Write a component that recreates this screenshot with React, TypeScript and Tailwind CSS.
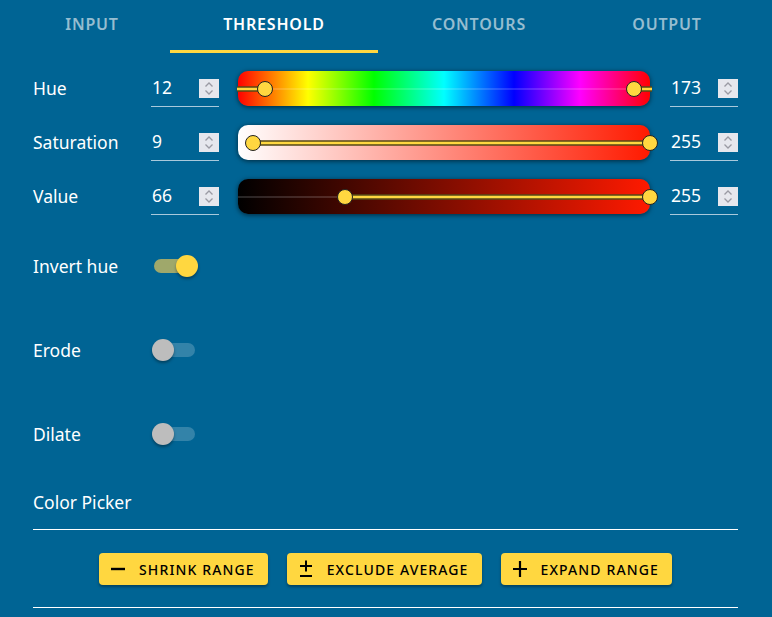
import React from "react";

const tabs = [
  { label: "INPUT", w: "w-[170px] pl-[14px]", active: false },
  { label: "THRESHOLD", w: "w-[208px]", active: true },
  { label: "CONTOURS", w: "w-[202px]", active: false },
  { label: "OUTPUT", w: "w-[192px] pr-[18px]", active: false },
];

function Spinner() {
  return (
    <div className="flex h-[19px] w-[20px] items-center justify-center bg-[#e6e7ed]">
      <svg width="12" height="15" viewBox="0 0 12 15" fill="none" stroke="#9a9aa3" strokeWidth="1.3">
        <path d="M2.5 5.5 6 2l3.5 3.5" />
        <path d="M2.5 9.5 6 13l3.5-3.5" />
      </svg>
    </div>
  );
}

function NumberBox({ value }: { value: number }) {
  return (
    <div className="flex h-[36px] w-[68px] items-center justify-between border-b border-[#a9c9dc] pl-px">
      <span className="text-[17.5px] leading-none">{value}</span>
      <Spinner />
    </div>
  );
}

interface SliderProps {
  lo: number;
  hi: number;
  max: number;
  gradient: string;
  inverted?: boolean;
}

function RangeSlider({ lo, hi, max, gradient, inverted }: SliderProps) {
  const a = (lo / max) * 100;
  const b = (hi / max) * 100;
  const sel = "absolute top-1/2 h-[5px] -translate-y-1/2 border-y border-black bg-[#ffd740]";
  const faint = "absolute top-1/2 h-px -translate-y-1/2 bg-white/30";
  return (
    <div className={`relative h-[35px] flex-1 rounded-[10px] shadow-[0_1px_5px_rgba(0,0,0,0.6)] ${gradient}`}>
      {inverted ? (
        <>
          <div className={sel} style={{ left: -1, width: `${a}%` }} />
          <div className={faint} style={{ left: `${a}%`, width: `${b - a}%` }} />
          <div className={sel} style={{ left: `${b}%`, right: -2 }} />
        </>
      ) : (
        <>
          <div className={faint} style={{ left: 0, width: `${a}%` }} />
          <div className={sel} style={{ left: `${a}%`, width: `${b - a}%` }} />
        </>
      )}
      {[a, b].map((p, i) => (
        <div
          key={i}
          className="absolute top-1/2 h-[16px] w-[16px] -translate-x-1/2 -translate-y-1/2 rounded-full border border-[#222] bg-[#ffd740]"
          style={{ left: `${p}%` }}
        />
      ))}
    </div>
  );
}

function Toggle({ on }: { on: boolean }) {
  return (
    <div className="relative h-[22px] w-[44px]">
      <div
        className={`absolute left-[1px] right-[2px] top-[4px] h-[14px] rounded-full ${
          on ? "bg-[#9fa86b]" : "bg-white/20"
        }`}
      />
      <div
        className={`absolute top-0 h-[22px] w-[22px] rounded-full shadow-[0_2px_3px_rgba(0,0,0,0.35)] ${
          on ? "right-[-1px] bg-[#ffd740]" : "left-[-1px] bg-[#bdbdbd]"
        }`}
      />
    </div>
  );
}

function Btn({ icon, label }: { icon: React.ReactNode; label: string }) {
  return (
    <button className="flex h-[32px] items-center gap-[13px] rounded-[4px] bg-[#ffd740] pl-[11px] pr-[13px] text-[14px] font-medium tracking-[0.08em] text-black shadow-[0_2px_3px_rgba(0,0,0,0.35)]">
      {icon}
      <span>{label}</span>
    </button>
  );
}

export default function App() {
  return (
    <div className="min-h-screen bg-[#006494] font-['Noto_Sans',sans-serif] text-white">
      <div className="flex h-[53px]">
        {tabs.map((t) => (
          <div key={t.label} className={`flex flex-col ${t.w}`}>
            <div
              className={`flex flex-1 items-center justify-center pb-[2px] text-[16px] font-semibold tracking-[0.05em] ${
                t.active ? "text-white" : "text-[#96bdd0]"
              }`}
            >
              {t.label}
            </div>
            <div className={`h-[3px] ${t.active ? "bg-[#ffd740]" : ""}`} />
          </div>
        ))}
      </div>

      <div className="pl-[33px] pr-[34px]">
        <div className="mt-[18px] flex flex-col gap-[19px]">
          {[
            { label: "Hue", lo: 12, hi: 173, max: 180, inv: true, g: "bg-[linear-gradient(to_right,#ff0000,#ffff00_17%,#00ff00_33%,#00ffff_50%,#0000ff_67%,#ff00ff_83%,#ff0000)]" },
            { label: "Saturation", lo: 9, hi: 255, max: 255, inv: false, g: "bg-[linear-gradient(to_right,#ffffff,#ff1a00)]" },
            { label: "Value", lo: 66, hi: 255, max: 255, inv: false, g: "bg-[linear-gradient(to_right,#000000,#ff1a00)]" },
          ].map((r) => (
            <div key={r.label} className="flex h-[35px] items-center">
              <div className="w-[118px] text-[17.5px]">{r.label}</div>
              <NumberBox value={r.lo} />
              <div className="ml-[19px] mr-[20px] flex flex-1">
                <RangeSlider lo={r.lo} hi={r.hi} max={r.max} gradient={r.g} inverted={r.inv} />
              </div>
              <NumberBox value={r.hi} />
            </div>
          ))}
        </div>

        <div className="mt-[32px] flex flex-col gap-[44px]">
          {[
            { label: "Invert hue", on: true },
            { label: "Erode", on: false },
            { label: "Dilate", on: false },
          ].map((t) => (
            <div key={t.label} className="flex h-[40px] items-center">
              <div className="w-[120px] text-[17.5px]">{t.label}</div>
              <Toggle on={t.on} />
            </div>
          ))}
        </div>

        <div className="mt-[28px] flex h-[48px] items-center border-b border-white pb-[7px] text-[17.5px]">
          Color Picker
        </div>

        <div className="mt-[23px] flex justify-center gap-[19px]">
          <Btn
            label="SHRINK RANGE"
            icon={
              <svg width="16" height="16" viewBox="0 0 16 16">
                <path d="M1 8h14" stroke="black" strokeWidth="2.4" />
              </svg>
            }
          />
          <Btn
            label="EXCLUDE AVERAGE"
            icon={
              <svg width="16" height="18" viewBox="0 0 16 18">
                <path d="M2 6h12M8 0.5v11M2 16h12" stroke="black" strokeWidth="2" />
              </svg>
            }
          />
          <Btn
            label="EXPAND RANGE"
            icon={
              <svg width="16" height="18" viewBox="0 0 16 18">
                <path d="M1 9h14M8 1v16" stroke="black" strokeWidth="2.2" />
              </svg>
            }
          />
        </div>

        <div className="mt-[22px] border-t border-white" />
      </div>
    </div>
  );
}
